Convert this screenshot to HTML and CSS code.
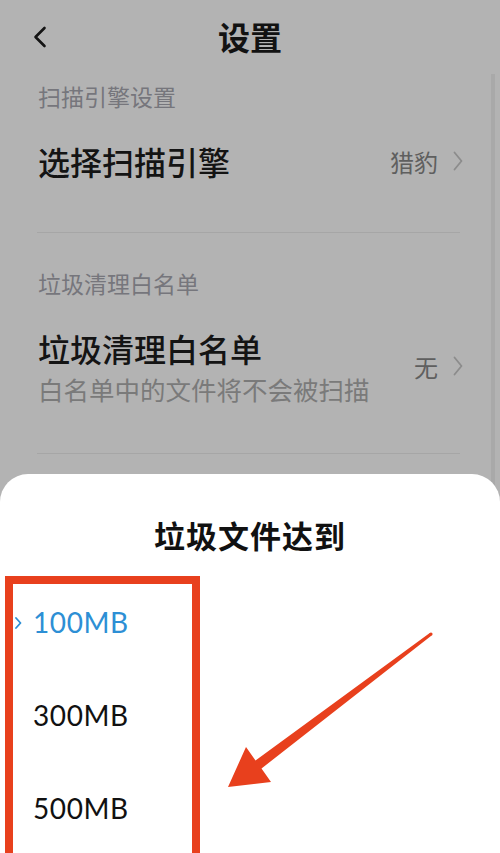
FILE: index.html
```html
<!DOCTYPE html>
<html lang="zh-CN">
<head>
<meta charset="utf-8">
<title>设置</title>
<link rel="stylesheet" href="styles.css">
</head>
<body>
<div class="screen">
  <header class="topbar">
    <svg class="back" width="14" height="22" viewBox="0 0 14 22"><path d="M11.5 2 L2.5 11 L11.5 20" fill="none" stroke="#141414" stroke-width="2.6" stroke-linecap="round" stroke-linejoin="round"/></svg>
    <h1 class="title">设置</h1>
  </header>
  <div class="scrollbar"></div>

  <div class="group-label first">扫描引擎设置</div>
  <div class="row row-one">
    <div class="row-main">
      <div class="row-title">选择扫描引擎</div>
    </div>
    <div class="row-value">猎豹</div>
    <svg class="chev" width="10" height="20" viewBox="0 0 10 20"><path d="M1.5 1.5 L8.5 10 L1.5 18.5" fill="none" stroke="#8c8c8c" stroke-width="1.8" stroke-linecap="round" stroke-linejoin="round"/></svg>
  </div>
  <div class="divider"></div>

  <div class="group-label second">垃圾清理白名单</div>
  <div class="row row-two">
    <div class="row-main">
      <div class="row-title">垃圾清理白名单</div>
      <div class="row-sub">白名单中的文件将不会被扫描</div>
    </div>
    <div class="row-value">无</div>
    <svg class="chev" width="10" height="20" viewBox="0 0 10 20"><path d="M1.5 1.5 L8.5 10 L1.5 18.5" fill="none" stroke="#8c8c8c" stroke-width="1.8" stroke-linecap="round" stroke-linejoin="round"/></svg>
  </div>
  <div class="divider"></div>

  <section class="sheet">
    <h2 class="sheet-title">垃圾文件达到</h2>
    <ul class="options">
      <li class="option selected">
        <svg class="sel-chev" width="7" height="12" viewBox="0 0 7 12"><path d="M1 1 L5.5 6 L1 11" fill="none" stroke="#2d8fd5" stroke-width="1.8" stroke-linecap="round" stroke-linejoin="round"/></svg>
        100MB
      </li>
      <li class="option">300MB</li>
      <li class="option">500MB</li>
    </ul>
  </section>

  <div class="highlight-box"></div>
  <svg class="arrow" width="500" height="853" viewBox="0 0 500 853">
    <polygon points="430.1,632.8 255.5,760.5 246,747 228,787 271,782 261.5,768.5 431.9,635.2" fill="#e8401d"/>
    <circle cx="431" cy="634" r="1.6" fill="#e8401d"/>
  </svg>
</div>
</body>
</html>
```

FILE: styles.css
```css
* { box-sizing: border-box; }
html, body {
  margin: 0;
  padding: 0;
}
body {
  width: 500px;
  height: 853px;
  overflow: hidden;
  background: #b3b3b3;
  font-family: "Noto Sans CJK SC", "Noto Sans", sans-serif;
}
.screen {
  position: relative;
  width: 500px;
  height: 853px;
  overflow: hidden;
  background: #b3b3b3;
}
.topbar {
  position: relative;
  height: 76px;
  display: flex;
  align-items: flex-start;
  justify-content: center;
}
.back {
  position: absolute;
  left: 33px;
  top: 26px;
}
.title {
  margin: 0;
  font-size: 32px;
  font-weight: 700;
  color: #121212;
  line-height: 72px;
}
.scrollbar {
  position: absolute;
  right: 5px;
  top: 74px;
  width: 4px;
  height: 420px;
  background: #a9a9a9;
}
.group-label {
  padding-left: 38px;
  font-size: 23px;
  line-height: 40px;
  height: 40px;
  color: #76767c;
}
.group-label.second {
  margin-top: 30px;
}
.row {
  display: flex;
  align-items: center;
  padding: 0 38px 0 38px;
}
.row-one {
  padding-top: 23px;
  padding-bottom: 49px;
}
.row-two {
  padding-top: 25px;
  padding-bottom: 49px;
}
.row-main {
  flex: 1;
}
.row-title {
  font-size: 32px;
  font-weight: 500;
  color: #141414;
  line-height: 44px;
  height: 44px;
}
.row-two .row-title {
  line-height: 40px;
  height: 40px;
}
.row-sub {
  margin-top: 6px;
  font-size: 25.5px;
  line-height: 30px;
  color: #7a7a7a;
}
.row-value {
  font-size: 24px;
  color: #5f5f5f;
  margin-right: 15px;
}
.chev {
  display: block;
  margin-right: -1px;
}
.divider {
  height: 1px;
  background: #a6a6a6;
  margin: 0 40px 0 37px;
}
.sheet {
  position: absolute;
  left: 0;
  right: 0;
  top: 474px;
  bottom: 0;
  background: #ffffff;
  border-radius: 28px 28px 0 0;
}
.sheet-title {
  margin: 0;
  padding-top: 42px;
  text-align: center;
  font-size: 31px;
  font-weight: 700;
  color: #111111;
  line-height: 38px;
  letter-spacing: 1px;
}
.options {
  list-style: none;
  margin: 53px 0 0 0;
  padding: 0 0 0 33px;
}
.option {
  position: relative;
  font-family: "Lato", "Noto Sans", sans-serif;
  font-size: 28px;
  letter-spacing: 0.6px;
  line-height: 30px;
  height: 93px;
  color: #111111;
}
.option.selected {
  color: #2d8fd5;
}
.sel-chev {
  position: absolute;
  left: -18px;
  top: 10px;
}
.highlight-box {
  position: absolute;
  left: 5px;
  top: 576px;
  width: 195px;
  height: 300px;
  border: 8px solid #e8401d;
}
.arrow {
  position: absolute;
  left: 0;
  top: 0;
  pointer-events: none;
}
```
